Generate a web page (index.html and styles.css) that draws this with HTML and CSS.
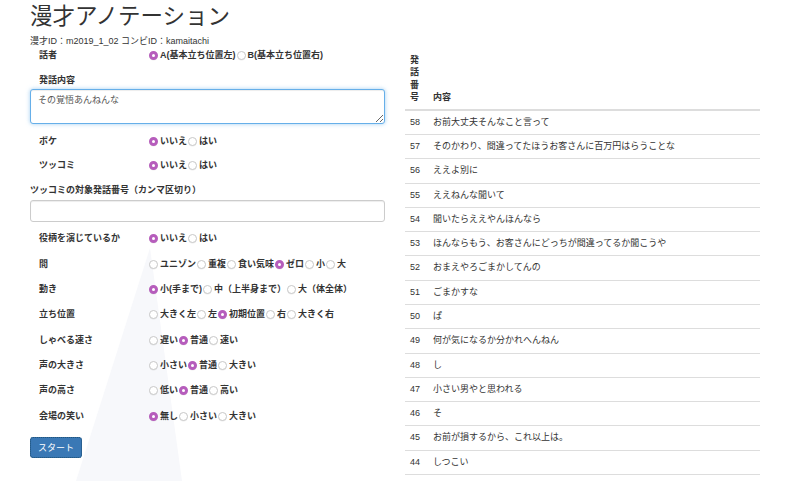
FILE: index.html
```html
<!DOCTYPE html>
<html lang="ja">
<head>
<meta charset="utf-8">
<title>漫才アノテーション</title>
<link rel="stylesheet" href="styles.css">
</head>
<body>
<svg class="watermark" width="800" height="481" viewBox="0 0 800 481" aria-hidden="true">
  <polygon points="150,248 76,481 182,481" fill="#f7f8fb"/>
</svg>
<div class="page">
  <div class="left">
    <h1 class="title">漫才アノテーション</h1>
    <div class="meta">漫才ID：m2019_1_02 コンビID：kamaitachi</div>

    <div class="field field-speaker">
      <div class="field-label">話者</div>
      <div class="opts">
        <label class="opt"><input type="radio" name="speaker" checked>A(基本立ち位置左)</label><label class="opt"><input type="radio" name="speaker">B(基本立ち位置右)</label>
      </div>
    </div>

    <div class="block-label indent label-content">発話内容</div>
    <textarea class="textarea">その覚悟あんねんな</textarea>

    <div class="field field-short field-boke">
      <div class="field-label">ボケ</div>
      <div class="opts">
        <label class="opt"><input type="radio" name="boke" checked>いいえ</label><label class="opt"><input type="radio" name="boke">はい</label>
      </div>
    </div>
    <div class="field field-short">
      <div class="field-label">ツッコミ</div>
      <div class="opts">
        <label class="opt"><input type="radio" name="tsukkomi" checked>いいえ</label><label class="opt"><input type="radio" name="tsukkomi">はい</label>
      </div>
    </div>

    <div class="block-label label-target">ツッコミの対象発話番号（カンマ区切り）</div>
    <input class="input" type="text">

    <div class="groups">
      <div class="field">
        <div class="field-label">役柄を演じているか</div>
        <div class="opts">
          <label class="opt"><input type="radio" name="role" checked>いいえ</label><label class="opt"><input type="radio" name="role">はい</label>
        </div>
      </div>
      <div class="field">
        <div class="field-label">間</div>
        <div class="opts">
          <label class="opt"><input type="radio" name="ma">ユニゾン</label><label class="opt"><input type="radio" name="ma">重複</label><label class="opt"><input type="radio" name="ma">食い気味</label><label class="opt"><input type="radio" name="ma" checked>ゼロ</label><label class="opt"><input type="radio" name="ma">小</label><label class="opt"><input type="radio" name="ma">大</label>
        </div>
      </div>
      <div class="field">
        <div class="field-label">動き</div>
        <div class="opts">
          <label class="opt"><input type="radio" name="move" checked>小(手まで)</label><label class="opt"><input type="radio" name="move">中（上半身まで）</label><label class="opt"><input type="radio" name="move">大（体全体）</label>
        </div>
      </div>
      <div class="field">
        <div class="field-label">立ち位置</div>
        <div class="opts">
          <label class="opt"><input type="radio" name="pos">大きく左</label><label class="opt"><input type="radio" name="pos">左</label><label class="opt"><input type="radio" name="pos" checked>初期位置</label><label class="opt"><input type="radio" name="pos">右</label><label class="opt"><input type="radio" name="pos">大きく右</label>
        </div>
      </div>
      <div class="field">
        <div class="field-label">しゃべる速さ</div>
        <div class="opts">
          <label class="opt"><input type="radio" name="speed">遅い</label><label class="opt"><input type="radio" name="speed" checked>普通</label><label class="opt"><input type="radio" name="speed">速い</label>
        </div>
      </div>
      <div class="field">
        <div class="field-label">声の大きさ</div>
        <div class="opts">
          <label class="opt"><input type="radio" name="vol">小さい</label><label class="opt"><input type="radio" name="vol" checked>普通</label><label class="opt"><input type="radio" name="vol">大きい</label>
        </div>
      </div>
      <div class="field">
        <div class="field-label">声の高さ</div>
        <div class="opts">
          <label class="opt"><input type="radio" name="pitch">低い</label><label class="opt"><input type="radio" name="pitch" checked>普通</label><label class="opt"><input type="radio" name="pitch">高い</label>
        </div>
      </div>
      <div class="field">
        <div class="field-label">会場の笑い</div>
        <div class="opts">
          <label class="opt"><input type="radio" name="laugh" checked>無し</label><label class="opt"><input type="radio" name="laugh">小さい</label><label class="opt"><input type="radio" name="laugh">大きい</label>
        </div>
      </div>
    </div>

    <button class="btn" type="button">スタート</button>
  </div>

  <div class="right">
    <table class="table">
      <thead>
        <tr><th class="col-num">発話番号</th><th>内容</th></tr>
      </thead>
      <tbody>
        <tr><td class="col-num">58</td><td>お前大丈夫そんなこと言って</td></tr>
        <tr><td class="col-num">57</td><td>そのかわり、間違ってたほうお客さんに百万円はらうことな</td></tr>
        <tr><td class="col-num">56</td><td>ええよ別に</td></tr>
        <tr><td class="col-num">55</td><td>ええねんな聞いて</td></tr>
        <tr><td class="col-num">54</td><td>聞いたらええやんほんなら</td></tr>
        <tr><td class="col-num">53</td><td>ほんならもう、お客さんにどっちが間違ってるか聞こうや</td></tr>
        <tr><td class="col-num">52</td><td>おまえやろごまかしてんの</td></tr>
        <tr><td class="col-num">51</td><td>ごまかすな</td></tr>
        <tr><td class="col-num">50</td><td>ぱ</td></tr>
        <tr><td class="col-num">49</td><td>何が気になるか分かれへんねん</td></tr>
        <tr><td class="col-num">48</td><td>し</td></tr>
        <tr><td class="col-num">47</td><td>小さい男やと思われる</td></tr>
        <tr><td class="col-num">46</td><td>そ</td></tr>
        <tr><td class="col-num">45</td><td>お前が損するから、これ以上は。</td></tr>
        <tr><td class="col-num">44</td><td>しつこい</td></tr>
      </tbody>
    </table>
  </div>
</div>
</body>
</html>
```

FILE: styles.css
```css
html, body {
  margin: 0;
  padding: 0;
  background: #fff;
}
body {
  font-family: "Liberation Sans", "Noto Sans CJK JP", sans-serif;
  font-size: 9px;
  color: #333;
  position: relative;
  overflow: hidden;
  height: 481px;
}
.watermark {
  position: absolute;
  left: 0;
  top: 0;
  z-index: 0;
}
.page {
  position: relative;
  z-index: 1;
  display: flex;
  gap: 20px;
  padding: 0 40px 0 30px;
}
.left {
  width: 355px;
  display: flex;
  flex-direction: column;
  align-items: flex-start;
}
.right {
  width: 355px;
  padding-top: 49px;
}
.title {
  margin: 0;
  height: 33px;
  line-height: 33px;
  font-size: 22.5px;
  font-weight: normal;
  color: #333;
  white-space: nowrap;
}
.meta {
  margin-top: 1.5px;
  line-height: 13px;
  font-size: 9px;
}
.field {
  display: flex;
  align-items: center;
  height: 25.3px;
  width: 100%;
}
.field-speaker {
  height: 13px;
  margin-top: 1px;
}
.field-short {
  height: 24px;
}
.field-boke {
  margin-top: 5px;
}
.field-label {
  width: 109px;
  padding-left: 9px;
  font-weight: bold;
  line-height: 13px;
  white-space: nowrap;
}
.opts {
  display: flex;
  align-items: center;
  font-weight: bold;
  line-height: 13px;
  white-space: nowrap;
}
.opt {
  display: inline-flex;
  align-items: center;
}
.opt input {
  appearance: none;
  -webkit-appearance: none;
  box-sizing: border-box;
  width: 9px;
  height: 9px;
  margin: 0 2px 0 1px;
  border-radius: 50%;
  border: 1px solid #c9c9c9;
  background: #fff;
  box-shadow: 0 0.5px 0.5px rgba(0,0,0,0.08);
}
.opt input:checked {
  border: 3px solid #b65dbc;
  background: #fff;
}
.block-label {
  font-weight: bold;
  line-height: 13px;
  white-space: nowrap;
}
.indent {
  padding-left: 9px;
}
.label-content {
  margin-top: 12px;
}
.textarea {
  box-sizing: border-box;
  margin-top: 2.5px;
  width: 355px;
  height: 35px;
  padding: 4px 7px;
  font-family: "Liberation Sans", "Noto Sans CJK JP", sans-serif;
  font-size: 9px;
  line-height: 13px;
  color: #555;
  border: 1px solid #66afe9;
  border-radius: 3px;
  box-shadow: inset 0 1px 1px rgba(0,0,0,.075), 0 0 4px rgba(102,175,233,.6);
  outline: none;
  resize: vertical;
}
.label-target {
  margin-top: 6.5px;
}
.input {
  box-sizing: border-box;
  margin-top: 3.5px;
  width: 355px;
  height: 22px;
  padding: 4px 7px;
  font-size: 9px;
  border: 1px solid #ccc;
  border-radius: 3px;
  box-shadow: inset 0 1px 1px rgba(0,0,0,.075);
  background: #fff;
}
.groups {
  margin-top: 4.35px;
  width: 100%;
}
.btn {
  margin-top: 8.25px;
  box-sizing: border-box;
  width: 52px;
  height: 21px;
  padding: 0;
  font-family: "Liberation Sans", "Noto Sans CJK JP", sans-serif;
  font-size: 9px;
  color: #fff;
  background: #3a78b5;
  border: 1px solid #2e6da4;
  border-radius: 3px;
  outline: 1px dotted #24557f;
  outline-offset: -1px;
}
.table {
  width: 355px;
  border-collapse: collapse;
  font-size: 9px;
}
.table th {
  text-align: left;
  vertical-align: bottom;
  font-weight: bold;
  line-height: 12.4px;
  padding: 5px;
  border-bottom: 2px solid #ddd;
}
.table td {
  padding: 5px;
  line-height: 13.3px;
  vertical-align: top;
  border-bottom: 1px solid #ddd;
}
.col-num {
  width: 13px;
}
```
